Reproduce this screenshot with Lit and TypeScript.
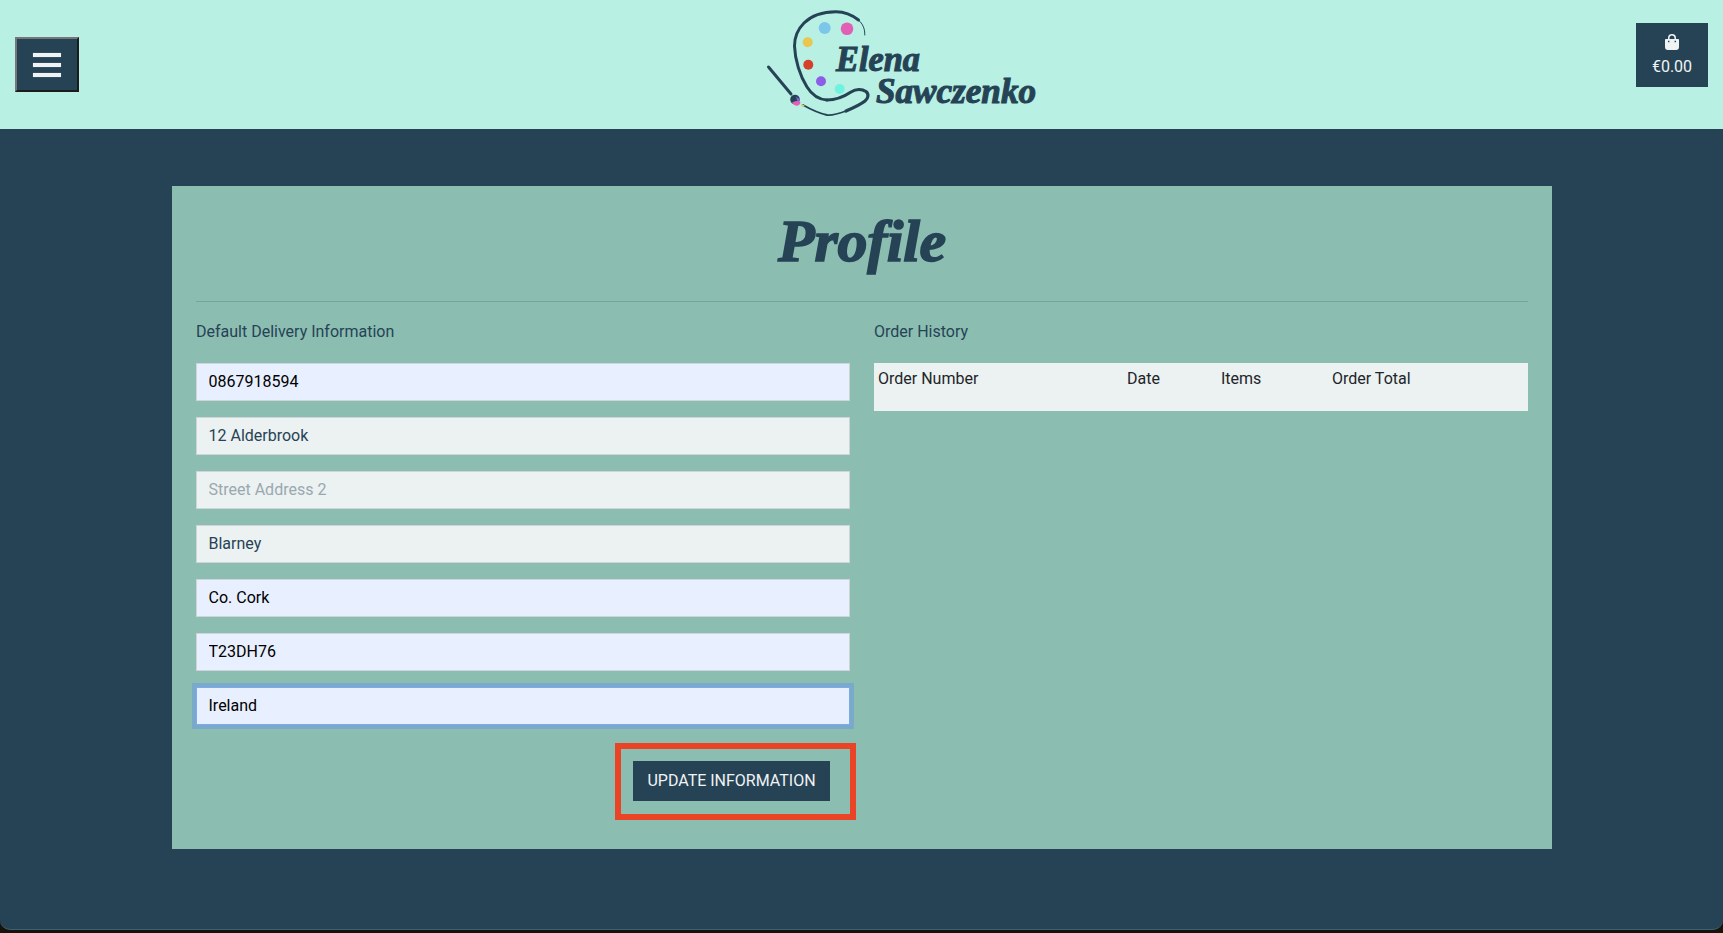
import { LitElement, html, css, svg } from 'lit';
import { customElement } from 'lit/decorators.js';
import { classMap } from 'lit/directives/class-map.js';

interface Field {
  value: string;
  placeholder: string;
  autofilled?: boolean;
  focused?: boolean;
}

const FIELDS: Field[] = [
  { value: '0867918594', placeholder: 'Phone Number', autofilled: true },
  { value: '12 Alderbrook', placeholder: 'Street Address 1' },
  { value: '', placeholder: 'Street Address 2' },
  { value: 'Blarney', placeholder: 'Town or City' },
  { value: 'Co. Cork', placeholder: 'County', autofilled: true },
  { value: 'T23DH76', placeholder: 'Postal Code', autofilled: true },
  { value: 'Ireland', placeholder: 'Country', autofilled: true, focused: true },
];

const COLUMNS = [
  { label: 'Order Number', cls: 'col-number' },
  { label: 'Date', cls: 'col-date' },
  { label: 'Items', cls: 'col-items' },
  { label: 'Order Total', cls: 'col-total' },
];

const DOTS = [
  { x: 824.7, y: 28, r: 6, fill: '#7cc6ea' },
  { x: 847, y: 28.7, r: 6.3, fill: '#e25fb6' },
  { x: 807.7, y: 42.3, r: 5, fill: '#e8c64f' },
  { x: 808.3, y: 64.7, r: 5, fill: '#d5402b' },
  { x: 821, y: 81.3, r: 5, fill: '#8c5ee6' },
  { x: 839.7, y: 89, r: 5, fill: '#6ff3e0' },
];

// Palette logo, drawn in page coordinates so the viewBox maps 1:1 to the header.
const logo = svg`
  <g fill="none" stroke="#264356" stroke-linecap="round">
    <path stroke-width="1" d="M864.8 35C865 29 863 24 858.5 20" />
    <path stroke-width="3" d="M858.5 20C851 14 843 11.7 836 11.7C824 11.7 812 15 804 23C798 29 794.5 37 794.5 46C795 60 800 76 807 87C812 95 819 99.5 827 100" />
    <path stroke-width="3.2" d="M827 100C836 100 845 96 851 92C856 89 862 89 866 91.5C869 94 868.5 98 865 101C860 105 853 108 846 111" />
    <path stroke-width="1.8" d="M846 111C838 114 832 115.5 827 115C818 113 810 109 803 105" />
    <path stroke-width="3" d="M768.5 67L791 94" />
  </g>
  <circle cx="795" cy="99.5" r="4.8" fill="#264356" />
  <path d="M792 102.5C795 101 799 100 800.5 102.5C800 106 795 107.5 792 102.5Z" fill="#e25fb6" />
  <path d="M796 96.5L800 99.5L797.5 102Z" fill="#8c5ee6" />
  <path d="M801 104L805 105.5L802 107Z" fill="#e8c64f" />
  ${DOTS.map((d) => svg`<circle cx=${d.x} cy=${d.y} r=${d.r} fill=${d.fill} />`)}
  <g class="logo-text">
    <text x="836" y="71" textLength="84" lengthAdjust="spacingAndGlyphs">Elena</text>
    <text x="876" y="103" textLength="160" lengthAdjust="spacingAndGlyphs">Sawczenko</text>
  </g>
`;

@customElement('app-root')
export class AppRoot extends LitElement {
  static styles = css`
    :host {
      display: block;
      height: 933px;
      background: #17130b;
      font-family: Roboto, sans-serif;
      font-size: 16px;
      color: #264356;
      overflow: hidden;
    }
    .page {
      height: 930px;
      box-sizing: border-box;
      background: #264356;
      border-bottom: 1px solid #3d6072;
      border-radius: 0 0 10px 10px;
      overflow: hidden;
    }

    /* header */
    .topbar {
      height: 129px;
      background: #b8f0e3;
      display: flex;
      align-items: flex-start;
      padding: 0 15px;
      box-sizing: border-box;
    }
    .burger {
      width: 64px;
      height: 55px;
      margin-top: 37px;
      padding: 0;
      background: #264356;
      border: 2px solid;
      border-color: #767676 #1c1c1c #1c1c1c #767676;
      display: flex;
      flex-direction: column;
      align-items: center;
      justify-content: center;
      gap: 6px;
    }
    .burger span {
      width: 28px;
      height: 4px;
      background: #f0f3f4;
      box-shadow: 0 0 1px #9fb4bf;
    }
    .logo {
      display: block;
      width: 280px;
      height: 129px;
      margin-left: 686px;
    }
    .logo-text text {
      font-family: 'Liberation Serif', serif;
      font-weight: 700;
      font-style: italic;
      font-size: 36px;
      fill: #264356;
      stroke: #264356;
      stroke-width: 1.1px;
    }
    .cart {
      width: 72px;
      height: 64px;
      margin-top: 23px;
      margin-left: auto;
      background: #264356;
      color: #f0f3f4;
      display: flex;
      flex-direction: column;
      align-items: center;
      padding-top: 11px;
      box-sizing: border-box;
    }
    .cart svg {
      display: block;
      width: 14px;
      height: 16px;
      margin-bottom: 5px;
    }
    .cart span {
      font-size: 16px;
      line-height: 24px;
    }

    /* profile card */
    main {
      padding: 57px 171px 0 172px;
    }
    .card {
      height: 663px;
      box-sizing: border-box;
      background: #8cbdb1;
      padding: 0 24px;
    }
    h1 {
      margin: 0;
      height: 115px;
      padding-top: 20px;
      box-sizing: border-box;
      text-align: center;
      font-family: 'Liberation Serif', serif;
      font-weight: 700;
      font-style: italic;
      font-size: 60px;
      line-height: 70px;
      letter-spacing: -0.3px;
      -webkit-text-stroke: 1.6px #264356;
      color: #264356;
    }
    .rule {
      height: 1px;
      background: #76a699;
    }
    .columns {
      display: grid;
      grid-template-columns: 654px 654px;
      column-gap: 24px;
    }
    .heading {
      margin: 0;
      height: 61px;
      padding-top: 18px;
      box-sizing: border-box;
      font-size: 16px;
      line-height: 24px;
      font-weight: 400;
    }
    form {
      display: flex;
      flex-direction: column;
      gap: 16px;
    }
    input {
      display: block;
      width: 100%;
      height: 38px;
      box-sizing: border-box;
      padding: 0 12px 2px 11.5px;
      border: 1px solid #ced4da;
      border-radius: 0;
      outline: none;
      background: #ecf1f1;
      color: #264356;
      font: 400 16px Roboto, sans-serif;
    }
    input::placeholder {
      color: #9aa8b0;
      opacity: 1;
    }
    input.autofilled {
      background: #e8effe;
      color: #000;
    }
    input.focused {
      border-color: #80a8f0;
      box-shadow: 0 0 0 4px #79aac9;
    }
    .actions {
      display: flex;
      justify-content: flex-end;
      margin-top: 20px;
      padding-right: 20px;
    }
    .update {
      position: relative;
      height: 40px;
      width: 197px;
      padding: 0 0 2px;
      border: none;
      border-radius: 0;
      background: #264356;
      color: #f0f3f4;
      font: 400 16px Roboto, sans-serif;
      text-transform: uppercase;
    }
    /* red annotation box that sits round the button in the screenshot */
    .update::after {
      content: '';
      position: absolute;
      top: -18px;
      left: -18px;
      right: -26px;
      bottom: -19px;
      border: 6px solid #ea4426;
      pointer-events: none;
    }
    table {
      width: 100%;
      border-collapse: collapse;
      table-layout: fixed;
      background: #ecf1f1;
      color: #212529;
    }
    th {
      height: 48px;
      padding: 4px;
      box-sizing: border-box;
      vertical-align: top;
      text-align: left;
      font-weight: 400;
      font-size: 16px;
      line-height: 24px;
    }
    .col-number { width: 249px; }
    .col-date { width: 94px; }
    .col-items { width: 111px; }
    .col-total { width: 200px; }
  `;

  render() {
    return html`
      <div class="page">
        <header class="topbar">
          <button class="burger" aria-label="Menu"><span></span><span></span><span></span></button>
          <svg class="logo" viewBox="765 0 280 129" aria-label="Elena Sawczenko">${logo}</svg>
          <a class="cart">
            <svg viewBox="0 0 14 16">
              <path
                fill="#f0f3f4"
                fill-rule="evenodd"
                d="M3 5V4a4 4 0 0 1 8 0v1h2.2a.8.8 0 0 1 .8.8V13a3 3 0 0 1-3 3H3a3 3 0 0 1-3-3V5.8A.8.8 0 0 1 .8 5H3zm1.5 0h5V4a2.5 2.5 0 0 0-5 0v1zM3 6.8v1.4h1.4V6.8H3zm6.6 0v1.4H11V6.8H9.6z"
              />
            </svg>
            <span>€0.00</span>
          </a>
        </header>
        <main>
          <section class="card">
            <h1>Profile</h1>
            <div class="rule"></div>
            <div class="columns">
              <div>
                <h2 class="heading">Default Delivery Information</h2>
                <form>
                  ${FIELDS.map(
                    (f) => html`
                      <input
                        class=${classMap({ autofilled: !!f.autofilled, focused: !!f.focused })}
                        .value=${f.value}
                        placeholder=${f.placeholder}
                      />
                    `,
                  )}
                  <div class="actions"><button class="update" type="button">Update Information</button></div>
                </form>
              </div>
              <div>
                <h2 class="heading">Order History</h2>
                <table>
                  <thead>
                    <tr>${COLUMNS.map((c) => html`<th class=${c.cls}>${c.label}</th>`)}</tr>
                  </thead>
                </table>
              </div>
            </div>
          </section>
        </main>
      </div>
    `;
  }
}
